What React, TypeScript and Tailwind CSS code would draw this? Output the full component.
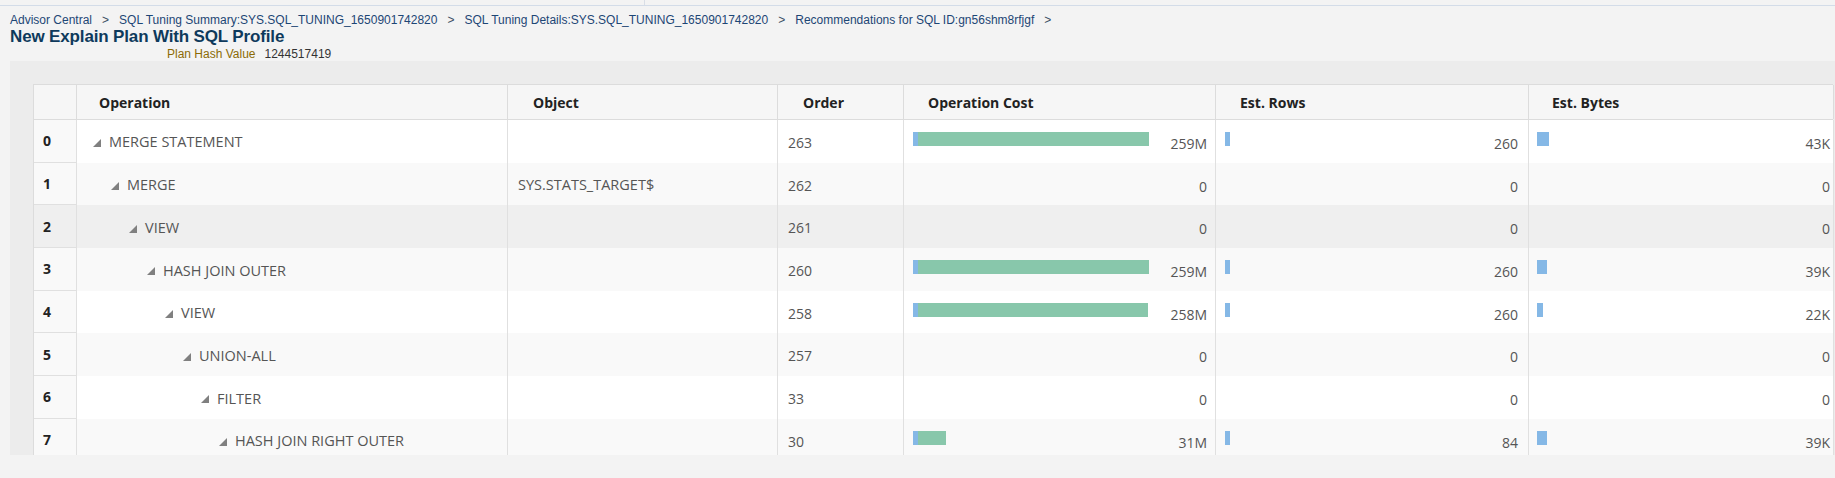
import React from 'react';

type PlanRow = {
  id: number;
  op: string;
  obj: string;
  order: number;
  cost: string;
  costBar: number;
  rows: string;
  rowsBar: number;
  bytes: string;
  bytesBar: number;
};

const PLAN: PlanRow[] = [
  { id: 0, op: 'MERGE STATEMENT', obj: '', order: 263, cost: '259M', costBar: 231, rows: '260', rowsBar: 5, bytes: '43K', bytesBar: 12 },
  { id: 1, op: 'MERGE', obj: 'SYS.STATS_TARGET$', order: 262, cost: '0', costBar: 0, rows: '0', rowsBar: 0, bytes: '0', bytesBar: 0 },
  { id: 2, op: 'VIEW', obj: '', order: 261, cost: '0', costBar: 0, rows: '0', rowsBar: 0, bytes: '0', bytesBar: 0 },
  { id: 3, op: 'HASH JOIN OUTER', obj: '', order: 260, cost: '259M', costBar: 231, rows: '260', rowsBar: 5, bytes: '39K', bytesBar: 10 },
  { id: 4, op: 'VIEW', obj: '', order: 258, cost: '258M', costBar: 230, rows: '260', rowsBar: 5, bytes: '22K', bytesBar: 6 },
  { id: 5, op: 'UNION-ALL', obj: '', order: 257, cost: '0', costBar: 0, rows: '0', rowsBar: 0, bytes: '0', bytesBar: 0 },
  { id: 6, op: 'FILTER', obj: '', order: 33, cost: '0', costBar: 0, rows: '0', rowsBar: 0, bytes: '0', bytesBar: 0 },
  { id: 7, op: 'HASH JOIN RIGHT OUTER', obj: '', order: 30, cost: '31M', costBar: 28, rows: '84', rowsBar: 5, bytes: '39K', bytesBar: 10 },
];

const CRUMBS = [
  'Advisor Central',
  'SQL Tuning Summary:SYS.SQL_TUNING_1650901742820',
  'SQL Tuning Details:SYS.SQL_TUNING_1650901742820',
  'Recommendations for SQL ID:gn56shm8rfjgf',
];

const GRID = 'grid grid-cols-[43px_431px_270px_126px_312px_313px_305px]';

const Expander = () => (
  <svg width="8" height="8" viewBox="0 0 8 8" className="shrink-0 mt-[2px]">
    <polygon points="8,0 8,8 0,8" fill="#808080" />
  </svg>
);

export default function App() {
  return (
    <div className="h-[478px] w-full overflow-hidden bg-[#f3f3f3] font-['Open_Sans',sans-serif]">
      {/* top strip */}
      <div className="flex h-[5px]">
        <div className="w-[645px] border-r border-[#d9dee6]" />
      </div>
      <div className="h-px bg-[#d3dce8]" />

      <div className="pl-[10px] font-['Liberation_Sans',Arial,sans-serif]">
        <div className="flex h-[21px] items-end text-[12px] leading-[14px] text-[#1d4675]">
          {CRUMBS.map((c) => (
            <React.Fragment key={c}>
              <span>{c}</span>
              <span className="px-[10px] text-[#3b4e63]">&gt;</span>
            </React.Fragment>
          ))}
        </div>
        <div className="h-[20px] text-[17px] font-bold leading-[20px] tracking-[-0.15px] text-[#0e3a5c]">
          New Explain Plan With SQL Profile
        </div>
        <div className="flex h-[14px] pl-[157px] text-[12px] leading-[14px]">
          <span className="text-[#8b6b05]">Plan Hash Value</span>
          <span className="pl-[9px] text-[#333]">1244517419</span>
        </div>
      </div>

      {/* table panel */}
      <div className="ml-[10px] h-[394px] overflow-hidden bg-[#ececec] pl-[23px] pt-[23px]">
        <div className="w-[1800px] border-l border-t border-[#dcdcdc] text-[14px]">
          <div className={`${GRID} h-[35px] bg-[#f6f6f6] font-bold text-[#222] border-b border-[#dcdcdc]`}>
            <div className="border-r border-[#dcdcdc]" />
            <div className="flex items-center border-r border-[#dcdcdc] pl-[22px]">Operation</div>
            <div className="flex items-center border-r border-[#dcdcdc] pl-[25px]">Object</div>
            <div className="flex items-center border-r border-[#dcdcdc] pl-[25px]">Order</div>
            <div className="flex items-center border-r border-[#dcdcdc] pl-[24px]">Operation Cost</div>
            <div className="flex items-center border-r border-[#dcdcdc] pl-[24px]">Est. Rows</div>
            <div className="flex items-center border-r border-[#dcdcdc] pl-[23px]">Est. Bytes</div>
          </div>

          {PLAN.map((r) => {
            const bg = r.id === 2 ? 'bg-[#efefef]' : r.id % 2 === 1 ? 'bg-[#f9f9f9]' : 'bg-white';
            return (
              <div key={r.id} className={`${GRID} h-[42.7px] ${bg} text-[#555]`}>
                <div className={`flex items-center border-b border-r border-[#e0e0e0] pl-[9px] font-bold text-[#222] ${r.id === 2 ? '' : 'bg-[#f9f9f9]'}`}>
                  {r.id}
                </div>
                <div className="flex items-center gap-[8px] border-r border-[#e0e0e0] pt-[2px] text-[14.5px]" style={{ paddingLeft: 16 + r.id * 18 }}>
                  <Expander />
                  <span>{r.op}</span>
                </div>
                <div className="flex items-center border-r border-[#e0e0e0] pl-[10px] pt-[2px] text-[14.5px]">{r.obj}</div>
                <div className="flex items-center border-r border-[#e0e0e0] pl-[10px] pt-[2px]">{r.order}</div>
                <div className="flex justify-between border-r border-[#e0e0e0] pl-[9px] pr-[8px]">
                  <div className="mt-[12px] flex h-[14px]">
                    {r.costBar > 0 && (
                      <>
                        <div className="w-[5px] bg-[#85b8e6]" />
                        <div className="bg-[#88c7ab]" style={{ width: r.costBar }} />
                      </>
                    )}
                  </div>
                  <span className="self-center pt-[4px]">{r.cost}</span>
                </div>
                <div className="flex justify-between border-r border-[#e0e0e0] pl-[9px] pr-[10px]">
                  <div className="mt-[12px] h-[14px] bg-[#85b8e6]" style={{ width: r.rowsBar }} />
                  <span className="self-center pt-[4px]">{r.rows}</span>
                </div>
                <div className="flex justify-between border-r border-[#e0e0e0] pl-[8px] pr-[3px]">
                  <div className="mt-[12px] h-[14px] bg-[#85b8e6]" style={{ width: r.bytesBar }} />
                  <span className="self-center pt-[4px]">{r.bytes}</span>
                </div>
              </div>
            );
          })}
        </div>
      </div>
    </div>
  );
}
